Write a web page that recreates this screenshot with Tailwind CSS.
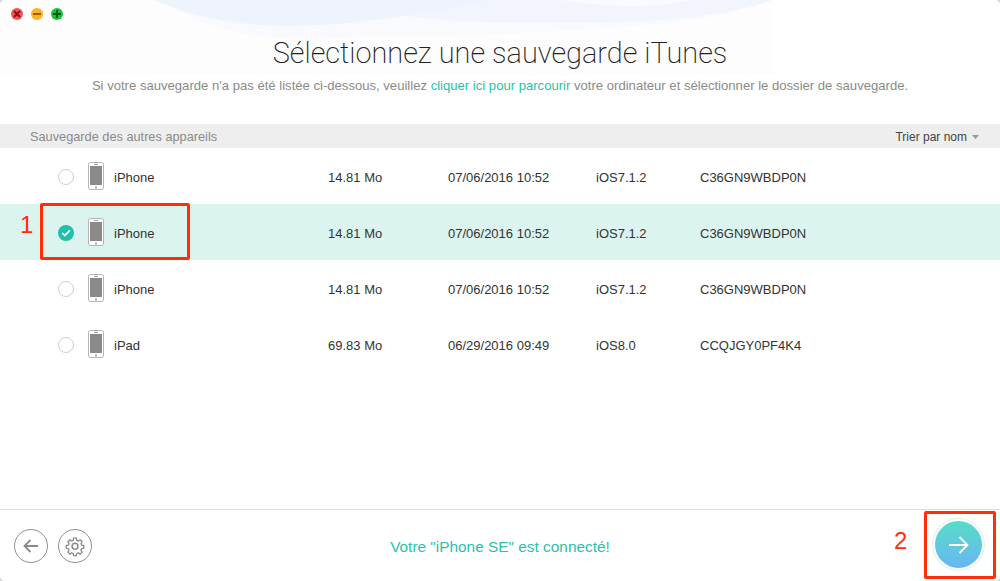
<!DOCTYPE html>
<html lang="fr">
<head>
  <meta charset="UTF-8" />
  <title>Sélectionnez une sauvegarde iTunes</title>
  <script src="https://cdn.jsdelivr.net/npm/@tailwindcss/browser@4"></script>
</head>
<body class="bg-[#d8d8d8] font-['Liberation_Sans',sans-serif]">
  <div class="relative w-[1000px] h-[581px] overflow-hidden bg-white rounded-[5px] flex flex-col">

    <!-- swoosh background -->
    <svg class="absolute left-0 top-0" width="775" height="80" viewBox="0 0 775 80" fill="none">
      <rect width="773" height="75" fill="#fdfdfe"/>
      <path d="M160 0C205 30 265 44 340 38C400 33 450 38 520 33C610 27 710 26 772 0Z" fill="#f8fafe"/>
      <path d="M345 0C390 18 450 23 540 23C620 23 710 22 772 0L690 0C650 10 600 6 560 0Z" fill="#f2f5fd"/>
      <path d="M155 0C185 15 240 27 290 26C360 25 420 15 490 0Z" fill="#eff4fc"/>
    </svg>

    <!-- traffic lights -->
    <div class="absolute left-[11px] top-[8px] flex gap-[8px]">
      <span class="w-3 h-3 rounded-full bg-[#f4545a] flex items-center justify-center">
        <svg width="8" height="8" viewBox="0 0 8 8"><path d="M1 1l6 6M7 1l-6 6" stroke="#8c0f14" stroke-width="2"/></svg>
      </span>
      <span class="w-3 h-3 rounded-full bg-[#fbb226] flex items-center justify-center">
        <svg width="8" height="8" viewBox="0 0 8 8"><path d="M0 4h8" stroke="#9a5d05" stroke-width="2"/></svg>
      </span>
      <span class="w-3 h-3 rounded-full bg-[#18c13b] flex items-center justify-center">
        <svg width="8" height="8" viewBox="0 0 8 8"><path d="M0 4h8M4 0v8" stroke="#05560f" stroke-width="2"/></svg>
      </span>
    </div>

    <!-- heading -->
    <header class="relative h-[124px] shrink-0 flex flex-col items-center">
      <h1 class="mt-[34px] h-[38px] leading-[38px] text-[28.9px] font-extralight text-[#222] font-['Roboto',sans-serif]">Sélectionnez une sauvegarde iTunes</h1>
      <p class="mt-[5px] text-[13.1px] leading-[18px] text-[#8a8a8a]">Si votre sauvegarde n'a pas été listée ci-dessous, veuillez <a class="text-[#2cbfa8]">cliquer ici pour parcourir</a> votre ordinateur et sélectionner le dossier de sauvegarde.</p>
    </header>

    <!-- list head -->
    <div class="h-6 shrink-0 bg-[#eeeeee] pl-[30px] pr-[21px] flex items-center justify-between">
      <span class="text-[12.75px] text-[#8a8a8a] pt-px">Sauvegarde des autres appareils</span>
      <span class="flex items-center gap-[5px] text-xs text-[#444] pt-px">Trier par nom
        <svg width="7" height="4" viewBox="0 0 7 4"><path d="M0 0h7L3.5 4z" fill="#999"/></svg>
      </span>
    </div>

    <!-- rows -->
    <main class="flex-1 text-[13px] text-[#333]">
      <div class="h-14 flex items-center pl-[58px]">
        <span class="w-4 h-4 mt-[2px] rounded-full border border-[#cfcfcf] mr-[14px]"></span>
        <svg class="mr-[10px]" width="16" height="28" viewBox="0 0 16 28"><rect x=".5" y=".5" width="15" height="27" rx="2" fill="#fff" stroke="#b5b5b5"/><rect x="2" y="4" width="12" height="19" fill="#8a8a8a"/><rect x="6" y="2" width="4" height="1" fill="#aaa"/><rect x="7" y="24.5" width="2" height="2" fill="#aaa"/></svg>
        <span class="w-[214px] pt-[3px]">iPhone</span><span class="w-[120px] pt-[3px]">14.81 Mo</span><span class="w-[148px] pt-[3px]">07/06/2016 10:52</span><span class="w-[104px] pt-[3px]">iOS7.1.2</span><span class="pt-[3px]">C36GN9WBDP0N</span>
      </div>
      <div class="h-14 flex items-center pl-[58px] bg-[#dcf4f0]">
        <span class="w-4 h-4 mt-[2px] rounded-full bg-[#1fc0a8] mr-[14px] flex items-center justify-center">
          <svg width="10" height="8" viewBox="0 0 10 8" fill="none"><path d="M1.2 4l2.6 2.6L8.8 1.4" stroke="#fff" stroke-width="1.7"/></svg>
        </span>
        <svg class="mr-[10px]" width="16" height="28" viewBox="0 0 16 28"><rect x=".5" y=".5" width="15" height="27" rx="2" fill="#fff" stroke="#b5b5b5"/><rect x="2" y="4" width="12" height="19" fill="#8a8a8a"/><rect x="6" y="2" width="4" height="1" fill="#aaa"/><rect x="7" y="24.5" width="2" height="2" fill="#aaa"/></svg>
        <span class="w-[214px] pt-[3px]">iPhone</span><span class="w-[120px] pt-[3px]">14.81 Mo</span><span class="w-[148px] pt-[3px]">07/06/2016 10:52</span><span class="w-[104px] pt-[3px]">iOS7.1.2</span><span class="pt-[3px]">C36GN9WBDP0N</span>
      </div>
      <div class="h-14 flex items-center pl-[58px]">
        <span class="w-4 h-4 mt-[2px] rounded-full border border-[#cfcfcf] mr-[14px]"></span>
        <svg class="mr-[10px]" width="16" height="28" viewBox="0 0 16 28"><rect x=".5" y=".5" width="15" height="27" rx="2" fill="#fff" stroke="#b5b5b5"/><rect x="2" y="4" width="12" height="19" fill="#8a8a8a"/><rect x="6" y="2" width="4" height="1" fill="#aaa"/><rect x="7" y="24.5" width="2" height="2" fill="#aaa"/></svg>
        <span class="w-[214px] pt-[3px]">iPhone</span><span class="w-[120px] pt-[3px]">14.81 Mo</span><span class="w-[148px] pt-[3px]">07/06/2016 10:52</span><span class="w-[104px] pt-[3px]">iOS7.1.2</span><span class="pt-[3px]">C36GN9WBDP0N</span>
      </div>
      <div class="h-14 flex items-center pl-[58px]">
        <span class="w-4 h-4 mt-[2px] rounded-full border border-[#cfcfcf] mr-[14px]"></span>
        <svg class="mr-[10px]" width="16" height="28" viewBox="0 0 16 28"><rect x=".5" y=".5" width="15" height="27" rx="2" fill="#fff" stroke="#b5b5b5"/><rect x="2" y="4" width="12" height="19" fill="#8a8a8a"/><rect x="6" y="2" width="4" height="1" fill="#aaa"/><rect x="7" y="24.5" width="2" height="2" fill="#aaa"/></svg>
        <span class="w-[214px] pt-[3px]">iPad</span><span class="w-[120px] pt-[3px]">69.83 Mo</span><span class="w-[148px] pt-[3px]">06/29/2016 09:49</span><span class="w-[104px] pt-[3px]">iOS8.0</span><span class="pt-[3px]">CCQJGY0PF4K4</span>
      </div>
    </main>

    <!-- footer -->
    <footer class="relative h-[72px] shrink-0 border-t border-[#dddddd] flex items-center justify-center">
      <div class="absolute left-[14px] top-[19px] flex gap-[10px]">
        <span class="w-[34px] h-[34px] rounded-full border border-[#8f8f8f] flex items-center justify-center">
          <svg width="16" height="14" viewBox="0 0 16 14" fill="none"><path d="M15 7H1.5M7.5 1L1.5 7l6 6" stroke="#8a8a8a" stroke-width="1.8"/></svg>
        </span>
        <span class="w-[34px] h-[34px] rounded-full border border-[#8f8f8f] flex items-center justify-center">
          <svg width="22" height="22" viewBox="0 0 24 24" fill="none" stroke="#8a8a8a" stroke-width="1.6" stroke-linejoin="round"><path d="M10.3 2.5h3.4l.5 2.6 1.9.8 2.2-1.5 2.4 2.4-1.5 2.2.8 1.9 2.6.5v3.4l-2.6.5-.8 1.9 1.5 2.2-2.4 2.4-2.2-1.5-1.9.8-.5 2.6h-3.4l-.5-2.6-1.9-.8-2.2 1.5-2.4-2.4 1.5-2.2-.8-1.9-2.6-.5v-3.4l2.6-.5.8-1.9-1.5-2.2 2.4-2.4 2.2 1.5 1.9-.8z" transform="translate(1.2 1.2) scale(.9)"/><circle cx="12" cy="12.2" r="3.2"/></svg>
        </span>
      </div>
      <span class="text-[15.4px] text-[#2cbfa8] pt-[3px]">Votre "iPhone SE" est connecté!</span>
      <span class="absolute left-[932px] top-[8px] w-[53px] h-[53px] rounded-full border border-[#d5f3ee] p-[2px]">
        <span class="w-full h-full rounded-full bg-gradient-to-b from-[#57dcc6] to-[#68b5f2] flex items-center justify-center">
          <svg width="20" height="18" viewBox="0 0 20 18" fill="none"><path d="M0 9h18.5M10.5 1L18.5 9l-8 8" stroke="#fff" stroke-width="1.8"/></svg>
        </span>
      </span>
    </footer>

    <!-- red annotations -->
    <span class="absolute left-[20px] top-[212px] text-[24px] leading-[26px] text-[#ff2d0a]">1</span>
    <div class="absolute left-[40px] top-[203px] w-[150px] h-[57px] border-[3px] border-[#ff2d0a] rounded-[2px]"></div>
    <span class="absolute left-[894px] top-[527px] text-[24px] leading-[28px] text-[#ff2d0a]">2</span>
    <div class="absolute left-[924px] top-[511px] w-[72px] h-[68px] border-[3px] border-[#ff2d0a] rounded-[2px]"></div>
  </div>
</body>
</html>
